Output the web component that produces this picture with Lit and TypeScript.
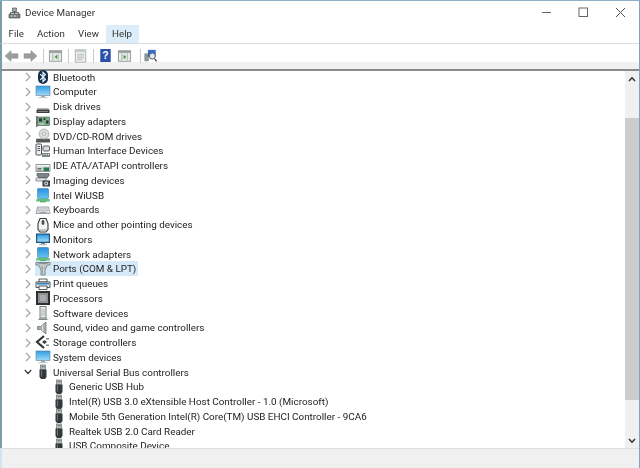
import { LitElement, html, css, svg } from "lit";
import { customElement } from "lit/decorators.js";

const defs = svg`<defs>
<linearGradient id="scr" x1="0" y1="0" x2="0" y2="1"><stop offset="0" stop-color="#2f9fe6"/><stop offset="1" stop-color="#9fd8f5"/></linearGradient>
<linearGradient id="net" x1="0" y1="0" x2="0" y2="1"><stop offset="0" stop-color="#2a8fe0"/><stop offset="1" stop-color="#66c4ef"/></linearGradient>
</defs>`;

const monitor = svg`<rect x="1" y="2" width="14" height="9.500" fill="url(#scr)" stroke="#5d7f96" stroke-width=".6"/><path d="M6 11.500h4v1.500H6z" fill="#9aa7ae"/><path d="M3.500 13h9v1.200h-9z" fill="#c3ccd1"/>`;

const icons: Record<string, unknown> = {
  bluetooth: svg`<rect x="3" y="1" width="10" height="14" rx="5" fill="#14304f"/><path d="M5.200 5.200 10.400 10.200 8 12.600V3.400l2.400 2.400L5.200 10.800" fill="none" stroke="#fff" stroke-width="1.100"/>`,
  computer: monitor,
  disk: svg`<path d="M2.500 9.500h11l1 2v2.500h-13v-2.500z" fill="#3c3f40"/><path d="M2.500 9.500h11l.5 1H2z" fill="#c8cccc"/><path d="M3 12h10v.8H3z" fill="#8f9495"/>`,
  display: svg`<rect x="2.500" y="4" width="12" height="8.500" fill="#7fa98e" stroke="#3d5a4a" stroke-width=".6"/><rect x="1" y="3" width="1.500" height="11" fill="#6b7475"/><rect x="4" y="5.500" width="3" height="3" fill="#223529"/><rect x="8.500" y="5" width="2" height="2" fill="#2f4a39"/><rect x="11" y="7.500" width="2.500" height="3" fill="#223529"/><path d="M4 10.500h5v1H4z" fill="#d5e6c8"/>`,
  dvd: svg`<path d="M2 10h12l1 2v2.500H1V12z" fill="#55595a"/><path d="M2 10h12l.5 1h-13z" fill="#c6caca"/><circle cx="9" cy="6" r="5" fill="#d8dcdc" stroke="#8e9596" stroke-width=".6"/><circle cx="9" cy="6" r="1.500" fill="#fff" stroke="#777" stroke-width=".5"/>`,
  hid: svg`<rect x="1" y="1" width="5.500" height="11" rx="1" fill="#eef0f0" stroke="#4a5052"/><path d="M2.500 3.500h2.500M2.500 5.500h2.500M2.500 7.500h2.500" stroke="#555"/><rect x="8" y="3" width="6.500" height="5" rx="1" fill="#d7dcdd" stroke="#5a6163"/><path d="M7 10h8v4H7z" fill="#7c8587"/><path d="M8.500 11.500h1M11 11.500h1M13 11.500h1" stroke="#eee"/>`,
  ide: svg`<path d="M1 6.500h14v7H1z" fill="#d1d6d6" stroke="#6c7373" stroke-width=".7"/><path d="M1.500 7h13v1.500h-13z" fill="#f2f3f3"/><rect x="8.500" y="9.500" width="5.500" height="3.500" fill="#287a52"/><path d="M2.500 10.500h4M2.500 12h4" stroke="#6b7171"/>`,
  imaging: svg`<path d="M2 1.500h12v2l-2 2.500H4L2 3.500z" fill="#7d8688" stroke="#3c4244" stroke-width=".6"/><path d="M1 6h10v3H1z" fill="#e2e5e5" stroke="#555c5e" stroke-width=".6"/><rect x="7.500" y="8.500" width="7.500" height="6" fill="#3b4042"/><circle cx="11.200" cy="11.500" r="2" fill="#dfe3e3"/><circle cx="11.200" cy="11.500" r=".9" fill="#444"/>`,
  network: svg`<rect x="2.500" y="1.500" width="11" height="10" rx=".8" fill="url(#net)" stroke="#3f7da6" stroke-width=".6"/><path d="M1.500 12h13l.5 2.500H1z" fill="#5fc27a"/><path d="M5 14.300h6v1H5z" fill="#389a55"/>`,
  keyboard: svg`<path d="M2.500 5h11l1.500 6.500H1z" fill="#e4e7e8" stroke="#7d8486" stroke-width=".7"/><path d="M3 7h10M2.500 8.800h11" stroke="#9aa0a2" stroke-dasharray="1 .6"/><path d="M4.500 10.400h7" stroke="#9aa0a2"/>`,
  mouse: svg`<path d="M5 1.500h6l2 5v6l-2 2.500H5l-2-2.500v-6z" fill="#f3f4f4" stroke="#333839" stroke-width="1.100"/><rect x="6.600" y="3" width="2.800" height="5" rx="1.400" fill="#4d5355"/><path d="M4.500 11.500c1.500 1.200 5.500 1.200 7 0v1.500l-1 1.300h-5l-1-1.300z" fill="#b9bfc1"/>`,
  monitors: svg`<rect x="1" y="2.500" width="14" height="9.500" fill="#24517a" /><rect x="2.200" y="3.700" width="11.600" height="7" fill="url(#scr)"/><path d="M6 12h4v1.300H6z" fill="#808b91"/><path d="M4 13.200h8v1H4z" fill="#a9b2b6"/>`,
  ports: svg`<path d="M1 1.500h14v2.500h-2.500L10 9v5H6V9L3.500 4H1z" fill="#cbd1d3" stroke="#6a7375" stroke-width=".8"/><path d="M3.500 2.700h9" stroke="#7e8789"/><path d="M7.500 5v8M5.800 5l1 3M10.200 5l-1 3" stroke="#8c9598" stroke-width=".7"/>`,
  print: svg`<path d="M4 3h8v3H4z" fill="#fff" stroke="#2f3436" stroke-width=".8"/><path d="M1 6h14v5.500H1z" fill="#dfe5e8" stroke="#2f3436" stroke-width=".8"/><path d="M2 7h12v1.500H2z" fill="#2a86c9"/><path d="M4 10h8v3.500H4z" fill="#fff" stroke="#2f3436" stroke-width=".8"/>`,
  cpu: svg`<rect x="1" y="1" width="14" height="14" fill="#2d2f30"/><rect x="3" y="3" width="10" height="10" fill="#8e9191"/><rect x="5" y="5" width="6" height="6" fill="#a8abab"/>`,
  software: svg`<rect x="5" y="1.500" width="6" height="11.500" fill="#eceeee" stroke="#595f61" stroke-width=".8"/><path d="M7 3.500v7.500M9 3.500v7.500" stroke="#9aa0a2" stroke-width=".8"/><path d="M3.500 13.500h9v1.500h-9z" fill="#83898b"/>`,
  sound: svg`<path d="M2.500 6.500h3L11 2v12l-5.500-4.500h-3z" fill="#aab0b2" stroke="#666d6f" stroke-width=".7"/><path d="M7.500 5v6" stroke="#e4e6e6"/>`,
  storage: svg`<path d="M9 1 2 7l7 6" fill="none" stroke="#2f3436" stroke-width="2.200"/><path d="M9.500 5 12 7l-2.500 2L7 7z" fill="#3a3f41"/><path d="M11 3h3v1.500h-3zM11 9.500h3V11h-3z" fill="#82898b"/>`,
  usb: svg`<rect x="5.500" y="1" width="5" height="4.500" fill="#b9bdbe" stroke="#5d6365" stroke-width=".6"/><path d="M6.800 2.300h1v1h-1zM8.500 2.300h1v1h-1z" fill="#444"/><path d="M4.500 5.500h7V13l-1.500 2H6l-1.500-2z" fill="#33383a"/><path d="M6 6.500h1v6H6z" fill="#70777a"/>`,
};

type Row = { label: string; icon: string; hl?: boolean };
const roots: Row[] = [
  { label: "Bluetooth", icon: "bluetooth" },
  { label: "Computer", icon: "computer" },
  { label: "Disk drives", icon: "disk" },
  { label: "Display adapters", icon: "display" },
  { label: "DVD/CD-ROM drives", icon: "dvd" },
  { label: "Human Interface Devices", icon: "hid" },
  { label: "IDE ATA/ATAPI controllers", icon: "ide" },
  { label: "Imaging devices", icon: "imaging" },
  { label: "Intel WiUSB", icon: "network" },
  { label: "Keyboards", icon: "keyboard" },
  { label: "Mice and other pointing devices", icon: "mouse" },
  { label: "Monitors", icon: "monitors" },
  { label: "Network adapters", icon: "network" },
  { label: "Ports (COM & LPT)", icon: "ports", hl: true },
  { label: "Print queues", icon: "print" },
  { label: "Processors", icon: "cpu" },
  { label: "Software devices", icon: "software" },
  { label: "Sound, video and game controllers", icon: "sound" },
  { label: "Storage controllers", icon: "storage" },
  { label: "System devices", icon: "computer" },
];
const children = [
  "Generic USB Hub",
  "Intel(R) USB 3.0 eXtensible Host Controller - 1.0 (Microsoft)",
  "Mobile 5th Generation Intel(R) Core(TM) USB EHCI Controller - 9CA6",
  "Realtek USB 2.0 Card Reader",
  "USB Composite Device",
];

const ico = (n: string) => html`<svg class="ico" viewBox="0 0 16 16">${defs}${icons[n]}</svg>`;
const chevRight = html`<svg class="chev" viewBox="0 0 6 10"><path d="M1 1l4 4-4 4" fill="none" stroke="#a3a3a3" stroke-width="1.200"/></svg>`;

const panel = (arrow: unknown) => svg`<rect x="1" y="2" width="14" height="12" fill="#e9ebeb" stroke="#8d9496"/><path d="M1 2h14v2.500H1z" fill="#9aa1a3"/><path d="M5 5v8M11 5v8" stroke="#9aa1a3"/><path d="M6 5.500h4.500v7.500H6z" fill="#dcebd8"/>${arrow}`;

@customElement("app-root")
export class AppRoot extends LitElement {
  static styles = css`
    :host { display: block; width: 640px; height: 468px; overflow: hidden; font-family: Roboto, "Open Sans", sans-serif; color: #222; background: #fff; }
    .win { display: flex; flex-direction: column; height: 100%; box-sizing: border-box; border-top: 1px solid #8fb0c4; border-right: 1px solid #7ea6c0; filter: blur(0.3px); }
    .title { height: 24px; flex: none; display: flex; align-items: center; border-left: 2px solid #7d9cab; box-sizing: border-box; padding-left: 6px; padding-bottom: 1px; font-size: 9.800px; color: #333; }
    .title-ico { width: 13px; height: 13px; margin-right: 4px; }
    .title span { flex: 1; }
    .wb { width: 37px; height: 22px; display: flex; align-items: center; justify-content: center; }
    .wb svg { width: 11px; height: 11px; }
    .menu { height: 19px; flex: none; display: flex; border-left: 2px solid #7d9cab; border-bottom: 1px solid #dcdcdc; box-sizing: border-box; font-size: 9.700px; color: #333; }
    .menu div { padding: 0 6.600px; line-height: 18px; }
    .menu .on { background: #dcecf8; }
    .bar { height: 25px; flex: none; display: flex; align-items: flex-start; box-sizing: border-box; padding-top: 5px; border-left: 2px solid #7d9cab; background: linear-gradient(#fff 0 18px, #f1f1f1 18px); }
    .tb { width: 19px; height: 13px; display: flex; justify-content: center; }
    .tb svg { width: 15px; height: 14px; flex: none; }
    .tb svg.narrow { width: 11px; height: 13px; }
    .sep { width: 1px; height: 14px; background: #c9c9c9; margin: 0 2.500px; }
    .sep.wide { margin: 0 0 0 5.500px; }
    .main { flex: 1; min-height: 0; display: flex; border-left: 2px solid #7d9cab; border-top: 2px solid #8b8b8b; }
    .tree { flex: 1; min-width: 0; overflow: hidden; margin-top: -1.300px; }
    .row { height: 14.750px; display: flex; align-items: center; padding-left: 22px; font-size: 9.900px; white-space: nowrap; }
    .row.child { padding-left: 49px; }
    .chevbox { width: 11px; display: flex; justify-content: flex-start; flex: none; }
    .chev { width: 6px; height: 10px; margin-left: 1px; }
    .chevbox .down { width: 8px; margin-left: 0; }
    .item { display: flex; align-items: center; height: 15px; padding-right: 2px; }
    .item.hl { background: #d6e9f8; }
    .ico { width: 16px; height: 16px; flex: none; margin-right: 2px; }
    .sb { width: 14px; flex: none; background: #f0f0f0; display: flex; flex-direction: column; align-items: stretch; }
    .sb-btn { height: 15px; flex: none; display: flex; align-items: center; justify-content: center; }
    .sb-btn svg { width: 8px; height: 6px; }
    .sb-gap { flex: 1; }
    .sb-gap.top { flex: 0 0 32px; }
    .thumb { height: 282px; flex: none; background: #cdcdcd; }
    .status { height: 20px; flex: none; box-sizing: border-box; background: #f0f0f0; border-top: 1px solid #dfdfdf; border-left: 2px solid #cfe4ec; }
  `;

  render() {
    return html`<div class="win">
      <div class="title">
        <svg class="title-ico" viewBox="0 0 13 13"><path d="M1 8h11v4H1z" fill="#7b8487" stroke="#444a4c" stroke-width=".6"/><path d="M4.500 2h4v3.500h-4z" fill="#9da5a8" stroke="#444a4c" stroke-width=".6"/><path d="M6.500 5.500V8M2.500 8V6.500h8V8" fill="none" stroke="#444a4c" stroke-width=".8"/><path d="M2.500 10h2M6 10h2" stroke="#d8dcdd"/></svg>
        <span>Device Manager</span>
        <div class="wb"><svg viewBox="0 0 11 11"><path d="M1 5.500h9" stroke="#666" stroke-width="1"/></svg></div>
        <div class="wb"><svg viewBox="0 0 11 11"><rect x="1" y="1" width="8.500" height="8.500" fill="none" stroke="#666" stroke-width="1"/></svg></div>
        <div class="wb"><svg viewBox="0 0 11 11"><path d="M1 1l9 9M10 1l-9 9" stroke="#555" stroke-width="1"/></svg></div>
      </div>
      <div class="menu"><div>File</div><div>Action</div><div>View</div><div class="on">Help</div></div>
      <div class="bar">
        <div class="tb"><svg viewBox="0 0 14 13"><path d="M1 6.500 6.500 1.500v3H13v4H6.500v3z" fill="#9a9f9f" stroke="#7f8484" stroke-width=".5"/></svg></div>
        <div class="tb"><svg viewBox="0 0 14 13"><path d="M13 6.500 7.500 1.500v3H1v4h6.500v3z" fill="#9a9f9f" stroke="#7f8484" stroke-width=".5"/></svg></div>
        <div class="sep"></div>
        <div class="tb"><svg viewBox="0 0 16 16">${panel(svg`<path d="M10 6.500 7 9l3 2.500z" fill="#3f8a54"/>`)}</svg></div>
        <div class="sep"></div>
        <div class="tb"><svg viewBox="0 0 16 16"><rect x="2" y="1" width="12" height="14" fill="#eef0f0" stroke="#a4aaac"/><path d="M2 1h12v2.500H2z" fill="#c5cacb"/><path d="M4 6h8M4 8h8M4 10h8M4 12h6" stroke="#b3b8ba"/></svg></div>
        <div class="sep"></div>
        <div class="tb"><svg class="narrow" viewBox="0 0 12 15"><rect x="0" y="0" width="12" height="15" fill="#2b4ea8"/><text x="6" y="12" text-anchor="middle" font-size="12" font-weight="700" font-family="Liberation Sans" fill="#fff">?</text></svg></div>
        <div class="tb"><svg viewBox="0 0 16 16">${panel(svg`<path d="M7 6.500 10 9l-3 2.500z" fill="#3f8a54"/>`)}</svg></div>
        <div class="sep wide"></div>
        <div class="tb"><svg viewBox="0 0 16 16"><rect x="1" y="5" width="5" height="9" fill="#8d9496"/><rect x="5" y="1" width="9" height="8" fill="#3670c4"/><circle cx="10" cy="8" r="3.500" fill="#dfe6ee" stroke="#46505a"/><path d="M12.500 11l2.500 3" stroke="#46505a" stroke-width="1.500"/></svg></div>
      </div>
      <div class="main">
        <div class="tree">
          ${roots.map(r => html`<div class="row"><div class="chevbox">${chevRight}</div><div class="item ${r.hl ? "hl" : ""}">${ico(r.icon)}<span>${r.label}</span></div></div>`)}
          <div class="row"><div class="chevbox"><svg class="chev down" viewBox="0 0 8 10"><path d="M.8 3l3.200 3.500L7.200 3" fill="none" stroke="#333" stroke-width="1.200"/></svg></div><div class="item">${ico("usb")}<span>Universal Serial Bus controllers</span></div></div>
          ${children.map(c => html`<div class="row child"><div class="item">${ico("usb")}<span>${c}</span></div></div>`)}
        </div>
        <div class="sb">
          <div class="sb-btn"><svg viewBox="0 0 8 6"><path d="M1 5l3-3.200L7 5" fill="none" stroke="#333" stroke-width="1.500"/></svg></div>
          <div class="sb-gap top"></div>
          <div class="thumb"></div>
          <div class="sb-gap"></div>
          <div class="sb-btn"><svg viewBox="0 0 8 6"><path d="M1 1l3 3.200L7 1" fill="none" stroke="#333" stroke-width="1.500"/></svg></div>
        </div>
      </div>
      <div class="status"></div>
    </div>`;
  }
}
